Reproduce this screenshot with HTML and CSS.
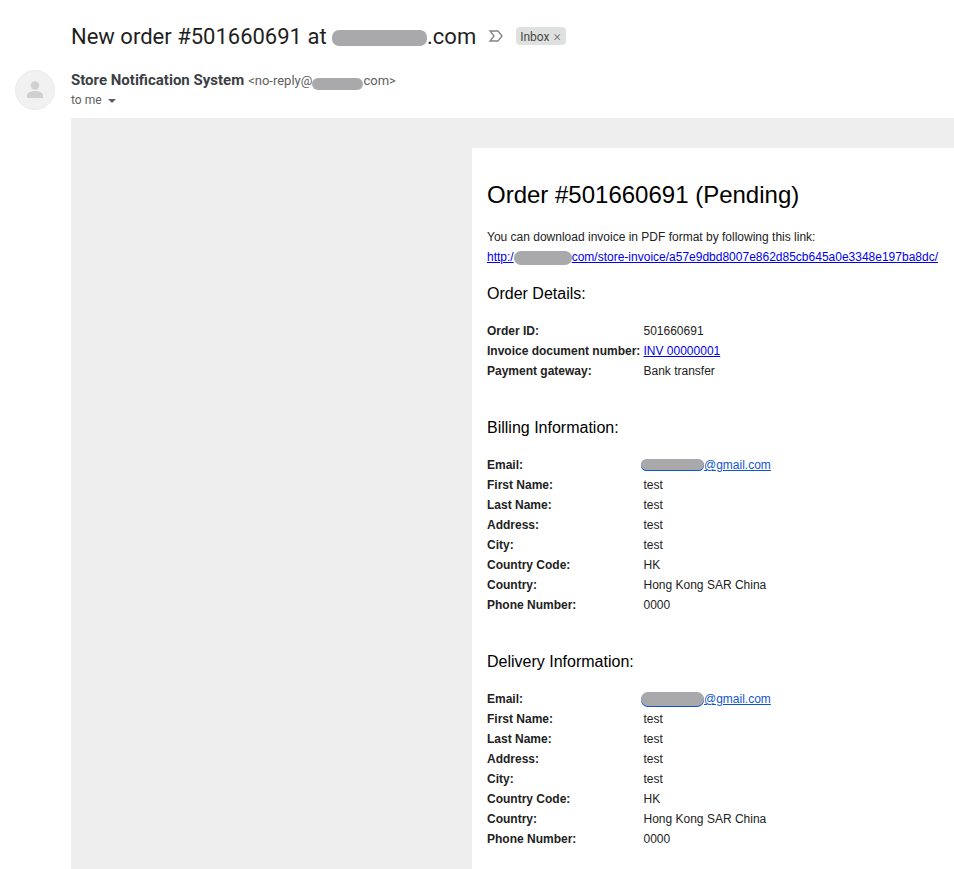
FILE: index.html
```html
<!DOCTYPE html>
<html lang="en">
<head>
    <meta charset="UTF-8">
    <title>New order #501660691</title>
    <link rel="stylesheet" href="styles.css">
</head>
<body>
    <div class="subject-row">
        <h2 class="subject">New order #501660691 at <span class="blur blur-subject"></span>.com</h2>
        <svg class="important" width="16" height="14" viewBox="0 0 16 14">
            <path d="M2 2h8l4 5-4 5H2l4-5z" fill="none" stroke="#80868b" stroke-width="1.3"/>
        </svg>
        <span class="label-chip">Inbox <span class="chip-x">×</span></span>
    </div>

    <div class="sender-row">
        <div class="avatar">
            <svg width="20" height="20" viewBox="0 0 20 20">
                <circle cx="10" cy="5.5" r="4.2" fill="#cfd1d0"/>
                <path d="M2 18v-2.5C2 12.5 6 11 10 11s8 1.500 8 4.500V18z" fill="#cfd1d0"/>
            </svg>
        </div>
        <div class="sender-info">
            <div class="sender-line">
                <span class="sender-name">Store Notification System</span>
                <span class="sender-mail">&lt;no-reply@<span class="blur blur-mail"></span>com&gt;</span>
            </div>
            <div class="to-line">to me <span class="caret"></span></div>
        </div>
    </div>

    <div class="mail-bg">
        <div class="mail-card">
            <h1>Order #501660691 (Pending)</h1>
            <p class="intro">You can download invoice in PDF format by following this link:<br>
                <a href="#">http:/<span class="blur blur-link"></span>com/store-invoice/a57e9dbd8007e862d85cb645a0e3348e197ba8dc/</a></p>

            <h3>Order Details:</h3>
            <table>
                <tr><th>Order ID:</th><td>501660691</td></tr>
                <tr><th>Invoice document number:</th><td><a href="#">INV 00000001</a></td></tr>
                <tr><th>Payment gateway:</th><td>Bank transfer</td></tr>
            </table>

            <h3 class="next">Billing Information:</h3>
            <table>
                <tr><th>Email:</th><td><a class="mail-link" href="#"><span class="blur blur-email"></span>@gmail.com</a></td></tr>
                <tr><th>First Name:</th><td>test</td></tr>
                <tr><th>Last Name:</th><td>test</td></tr>
                <tr><th>Address:</th><td>test</td></tr>
                <tr><th>City:</th><td>test</td></tr>
                <tr><th>Country Code:</th><td>HK</td></tr>
                <tr><th>Country:</th><td>Hong Kong SAR China</td></tr>
                <tr><th>Phone Number:</th><td>0000</td></tr>
            </table>

            <h3 class="next">Delivery Information:</h3>
            <table>
                <tr><th>Email:</th><td><a class="mail-link" href="#"><span class="blur blur-email blur-email-tall"></span>@gmail.com</a></td></tr>
                <tr><th>First Name:</th><td>test</td></tr>
                <tr><th>Last Name:</th><td>test</td></tr>
                <tr><th>Address:</th><td>test</td></tr>
                <tr><th>City:</th><td>test</td></tr>
                <tr><th>Country Code:</th><td>HK</td></tr>
                <tr><th>Country:</th><td>Hong Kong SAR China</td></tr>
                <tr><th>Phone Number:</th><td>0000</td></tr>
            </table>
        </div>
    </div>
</body>
</html>
```

FILE: styles.css
```css
* {
    box-sizing: border-box;
    margin: 0;
    padding: 0;
}

body {
    height: 869px;
    overflow: hidden;
    background: white;
    font-family: Roboto, Arial, sans-serif;
    color: #202124;
}

/* Redacted bits of the screenshot */
.blur {
    display: inline-block;
    background: #a9a9ac;
    border-radius: 7px;
    vertical-align: middle;
}

.blur-subject {
    width: 95px;
    height: 16px;
    vertical-align: -2px;
}

.blur-mail {
    width: 51px;
    height: 12px;
    vertical-align: -5px;
}

.blur-link {
    width: 58px;
    height: 14px;
    vertical-align: -4px;
}

.blur-email {
    width: 63.5px;
    height: 11px;
    margin-left: -3px;
    vertical-align: -1px;
    box-shadow: 0 1px 0 #1155cc;
}

.blur-email-tall {
    height: 14px;
    vertical-align: -3px;
}

/* Subject */
.subject-row {
    display: flex;
    align-items: center;
    height: 70px;
    padding-top: 2px;
    padding-left: 71px;
}

.subject {
    font-size: 22px;
    font-weight: 400;
    color: #1f1f1f;
}

.important {
    margin-left: 12px;
}

.label-chip {
    margin-left: 12px;
    padding: 0 4px;
    width: 50px;
    height: 18px;
    line-height: 18px;
    background: #dfe1e0;
    border-radius: 4px;
    font-size: 12px;
    white-space: nowrap;
    color: #444746;
}

.chip-x {
    margin-left: 1px;
    font-size: 14px;
    font-weight: 300;
    color: #5f6368;
}

/* Sender */
.sender-row {
    display: flex;
    height: 48px;
    padding-left: 15px;
}

.avatar {
    display: flex;
    align-items: center;
    justify-content: center;
    width: 40px;
    height: 40px;
    background: #f1f1f1;
    border: 1px solid #ebebeb;
    border-radius: 50%;
}

.sender-info {
    margin-left: 16px;
}

.sender-line {
    height: 20px;
    line-height: 20px;
}

.sender-name {
    font-size: 15px;
    font-weight: 700;
    color: #3c4043;
}

.sender-mail {
    font-size: 13px;
    color: #5e5e5e;
}

.to-line {
    height: 20px;
    line-height: 20px;
    font-size: 12px;
    color: #5e5e5e;
}

.caret {
    display: inline-block;
    margin-left: 3px;
    vertical-align: middle;
    border-top: 4px solid #5e5e5e;
    border-left: 4px solid transparent;
    border-right: 4px solid transparent;
}

/* Mail body */
.mail-bg {
    margin-left: 71px;
    height: 751px;
    padding: 30px 0 0 401px;
    background: #eeeeee;
}

.mail-card {
    height: 721px;
    padding: 30px 15px 0;
    background: white;
    font-family: "Liberation Sans", Arial, sans-serif;
    font-size: 12px;
    color: #222222;
}

h1 {
    font-size: 24px;
    font-weight: 400;
    line-height: 34px;
    color: black;
}

.intro {
    margin-top: 15px;
    line-height: 20px;
}

a {
    color: #0000ee;
}

.mail-link {
    color: #1155cc;
}

h3 {
    margin-top: 15px;
    font-size: 16px;
    font-weight: 400;
    line-height: 24px;
    color: black;
}

h3.next {
    margin-top: 35px;
}

table {
    margin-top: 15px;
    border-collapse: collapse;
}

th {
    width: 156.5px;
    height: 20px;
    padding: 0;
    font-weight: 700;
    text-align: left;
}

td {
    height: 20px;
    padding: 0;
}
```
